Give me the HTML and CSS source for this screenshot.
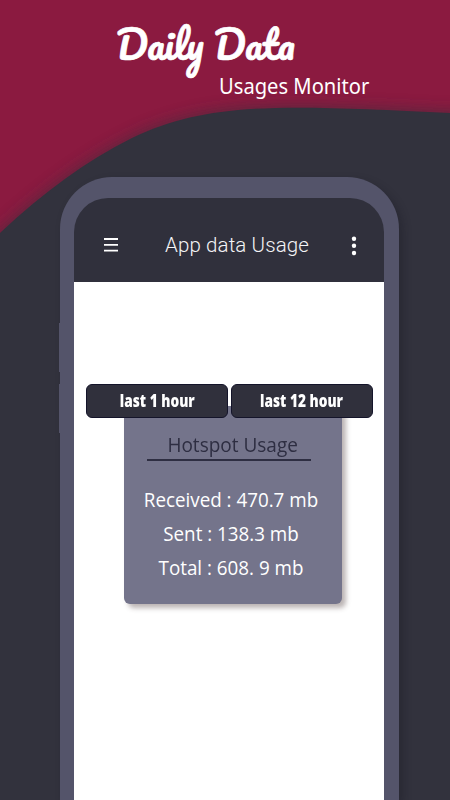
FILE: index.html
```html
<!DOCTYPE html>
<html lang="en">
<head>
    <meta charset="UTF-8">
    <meta name="viewport" content="width=device-width, initial-scale=1.0">
    <title>Daily Data Usages Monitor</title>
    <link rel="stylesheet" href="styles.css">
</head>
<body>
    <svg class="wave" width="450" height="800" viewBox="0 0 450 800">
        <defs>
            <filter id="shade" x="-10%" y="-10%" width="120%" height="120%">
                <feGaussianBlur stdDeviation="8"/>
            </filter>
        </defs>
        <path class="wave-shadow" filter="url(#shade)" d="M-40 270 L0 233 C44 192 86 161 132 138 C208 101 285 105 450 113 L490 115 V840 H-40 Z"/>
        <path class="wave-fill" d="M0 233 C44 192 86 161 132 138 C208 101 285 105 450 113 V800 H0 Z"/>
    </svg>

    <div class="title">
        <h1>Daily Data</h1>
        <h2>Usages Monitor</h2>
    </div>

    <div class="phone">
        <div class="screen">
            <div class="topbar">
                <svg class="menu" width="14" height="14" viewBox="0 0 14 14">
                    <path d="M0 1h14M0 6.8h14M0 12.6h14"/>
                </svg>
                <span class="name">App data Usage</span>
                <svg class="dots" width="6" height="20" viewBox="0 0 6 20">
                    <circle cx="3" cy="2.8" r="2.2"/>
                    <circle cx="3" cy="9.8" r="2.2"/>
                    <circle cx="3" cy="17" r="2.2"/>
                </svg>
            </div>
            <div class="tabs">
                <div class="tab"><span>last 1 hour</span></div>
                <div class="tab"><span>last 12 hour</span></div>
            </div>
            <div class="card">
                <h3><span>Hotspot Usage</span></h3>
                <p>Received : 470.7 mb</p>
                <p>Sent : 138.3 mb</p>
                <p>Total : 608. 9 mb</p>
            </div>
        </div>
    </div>
</body>
</html>
```
FILE: styles.css
```css
* {
    box-sizing: border-box;
}
body {
    margin: 0;
    width: 450px;
    height: 800px;
    overflow: hidden;
    background-color: #8b1a40;
    font-family: "Open Sans", sans-serif;
}
h1, h2, h3, p {
    margin: 0;
    font-weight: 400;
    white-space: nowrap;
}
.wave {
    position: absolute;
    top: 0;
    left: 0;
    z-index: -1;
}
.wave-shadow {
    fill: #30303b;
    opacity: 0.65;
}
.wave-fill {
    fill: #32323d;
}
.title {
    height: 177px;
    padding-top: 18px;
    color: #fff;
}
.title h1 {
    width: max-content;
    margin-left: 116px;
    font-family: Pacifico, cursive;
    font-size: 38px;
    line-height: 52px;
    -webkit-text-stroke: 0.7px #fff;
}
.title h2 {
    width: max-content;
    margin-left: 218px;
    font-family: "Noto Sans", sans-serif;
    font-size: 21px;
    line-height: 32px;
    transform: translateX(1px) scaleX(0.96);
    transform-origin: left;
}
.phone {
    position: relative;
    width: 339px;
    height: 623px;
    margin-left: 60px;
    padding: 21px 15px 0 14px;
    background-color: #54546a;
    border-radius: 52px 52px 0 0;
    box-shadow: 4px 4px 9px rgba(20, 20, 30, 0.3);
}
/* volume buttons on the left edge */
.phone::before,
.phone::after {
    content: "";
    position: absolute;
    left: -1px;
    width: 1px;
    height: 49px;
    background-color: #54546a;
}
.phone::before {
    top: 146px;
}
.phone::after {
    top: 207px;
}
.screen {
    height: 602px;
    background: linear-gradient(#30303c 84px, #fff 84px);
    border-radius: 34px 34px 0 0;
}
.topbar {
    display: flex;
    align-items: center;
    height: 84px;
    padding: 12px 27px 0 30px;
    color: #f4f4f6;
}
.menu {
    margin-bottom: 2px;
    stroke: #fff;
    stroke-width: 1.8;
}
.name {
    flex: 1;
    padding-left: 47px;
    margin-bottom: 2px;
    font-family: Roboto, sans-serif;
    font-size: 20.5px;
    font-weight: 300;
    letter-spacing: 0.12px;
    white-space: nowrap;
}
.dots {
    fill: #fff;
}
.tabs {
    position: relative;
    z-index: 1;
    display: flex;
    gap: 3px;
    margin: 102px 11px 0 12px;
}
.tab {
    flex: 1;
    height: 34px;
    background-color: #30303c;
    border: 1px solid #14142a;
    border-radius: 6px;
    color: #fff;
    font-size: 18px;
    font-weight: 800;
    line-height: 31px;
    display: flex;
    justify-content: center;
}
.tab span {
    flex: none;
    transform: scaleX(0.76);
    white-space: nowrap;
}
.card {
    width: 218px;
    height: 198px;
    margin: -12px 0 0 50px;
    padding-top: 25px;
    background-color: #74748b;
    border-radius: 0 0 6px 6px;
    box-shadow: 4px 4px 5px rgba(60, 40, 40, 0.35);
    color: #fff;
    text-align: center;
}
.card h3 {
    width: 164px;
    height: 30px;
    margin: 0 auto 22px 23px;
    padding-left: 7px;
    border-bottom: 2px solid #2e2e42;
    color: #2e2e42;
    font-size: 20px;
    line-height: 27px;
}
.card h3 span {
    display: inline-block;
    transform: scaleX(0.95);
}
.card p {
    font-size: 20px;
    font-weight: 500;
    line-height: 34px;
    transform: translateX(-2px) scaleX(0.94);
}
```
